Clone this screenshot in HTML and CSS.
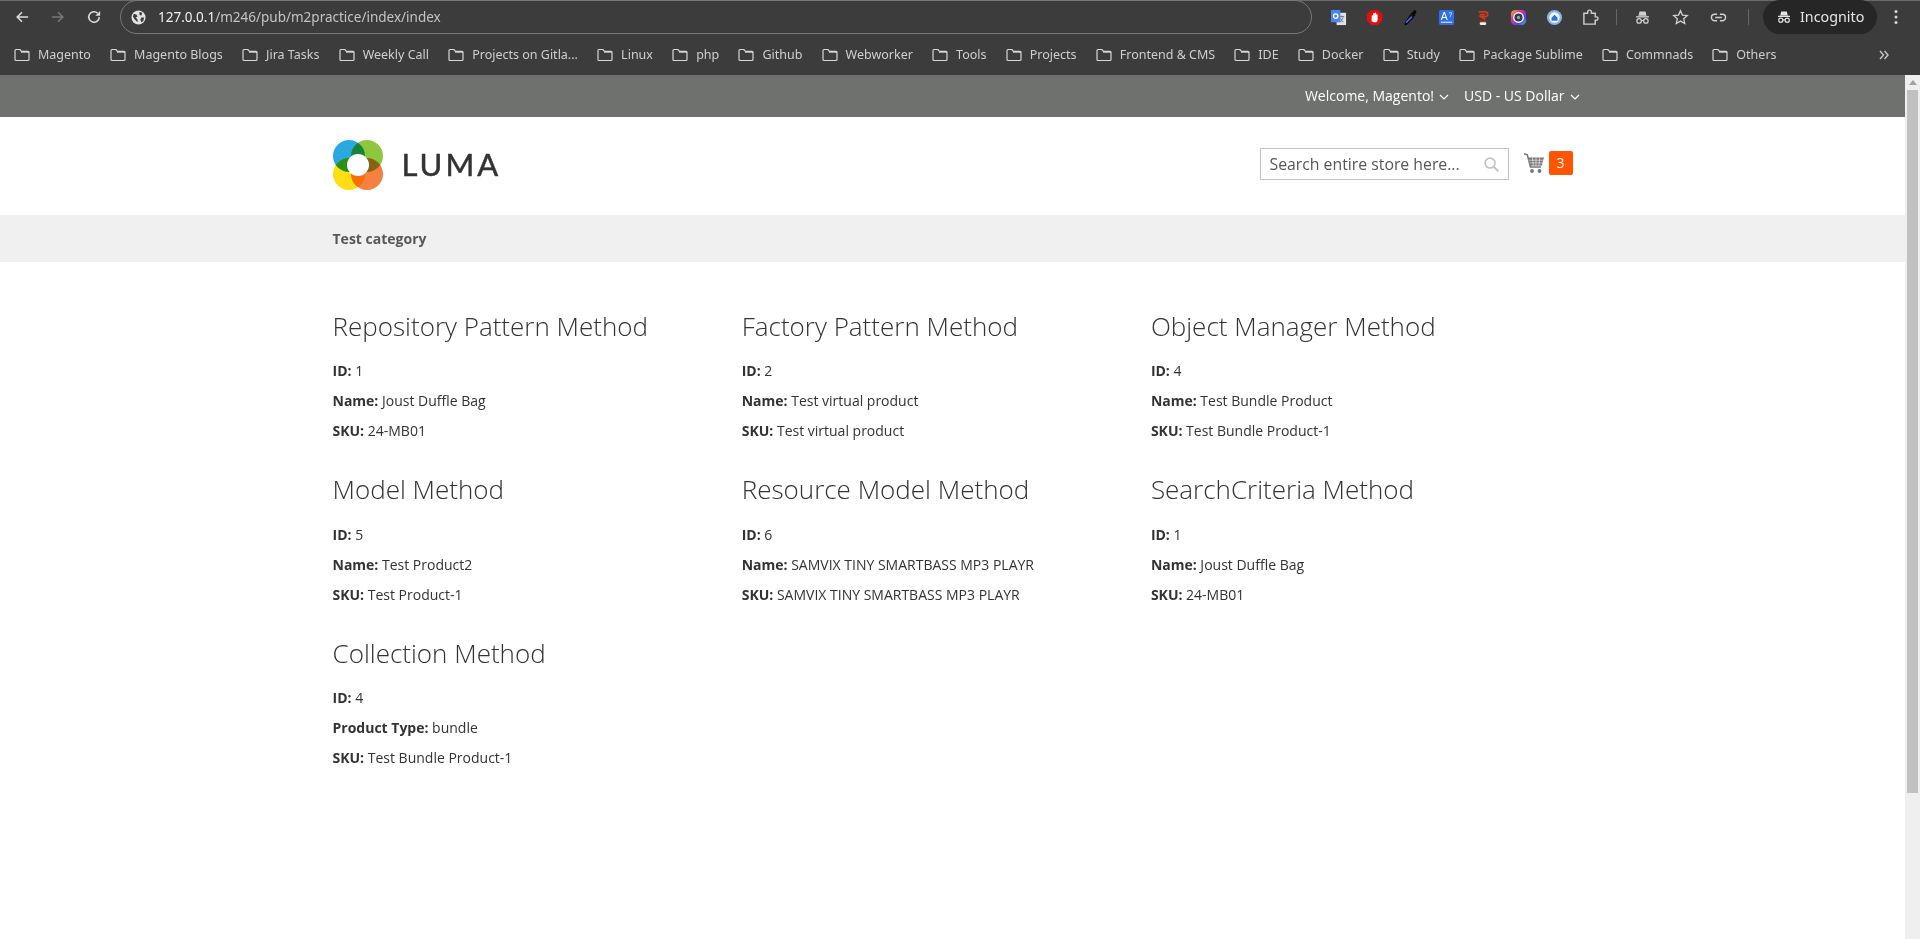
FILE: index.html
```html
<!DOCTYPE html>
<html lang="en">
<head>
    <meta charset="UTF-8">
    <meta name="viewport" content="width=device-width, initial-scale=1.0">
    <title>Test category</title>
    <link rel="stylesheet" href="styles.css">
</head>
<body>
    <svg class="sprites" width="0" height="0">
        <symbol id="folder" viewBox="0 0 16 14">
            <path d="M1 2.500c0-.6.4-1 1-1h3.900l1.600 1.800h6.500c.6 0 1 .4 1 1v7.200c0 .6-.4 1-1 1H2c-.6 0-1-.4-1-1z" fill="none" stroke="currentColor" stroke-width="1.200"/>
            <path d="M7 4.200h8" stroke="currentColor" stroke-width="1"/>
        </symbol>
        <symbol id="spy" viewBox="0 0 20 20">
            <path d="M6.500 3h7l1.300 5H5.200z" fill="currentColor"/>
            <path d="M2.500 9.200h15" stroke="currentColor" stroke-width="1.600"/>
            <circle cx="6" cy="14" r="2.600" fill="none" stroke="currentColor" stroke-width="1.500"/>
            <circle cx="14" cy="14" r="2.600" fill="none" stroke="currentColor" stroke-width="1.500"/>
            <path d="M8.600 13.600h2.800" stroke="currentColor" stroke-width="1.300"/>
        </symbol>
        <symbol id="chevron" viewBox="0 0 10 6">
            <path d="M1 1l4 4 4-4" fill="none" stroke="currentColor" stroke-width="1.200"/>
        </symbol>
    </svg>

    <header class="browser">
        <div class="toolbar">
            <div class="nav-buttons">
                <svg class="tool-icon" viewBox="0 0 16 16"><path d="M15 8H2.500M8 2.500L2.500 8 8 13.500" fill="none" stroke="currentColor" stroke-width="1.800"/></svg>
                <svg class="tool-icon disabled" viewBox="0 0 16 16"><path d="M1 8h12.500M8 2.500L13.500 8 8 13.500" fill="none" stroke="currentColor" stroke-width="1.800"/></svg>
                <svg class="tool-icon" viewBox="0 0 16 16"><path d="M14 8a6 6 0 1 1-1.800-4.300" fill="none" stroke="currentColor" stroke-width="1.800"/><path d="M15 1v5.500H9.500z" fill="currentColor"/></svg>
            </div>
            <div class="address-bar">
                <svg class="globe" viewBox="0 0 16 16"><circle cx="8" cy="8" r="7.500" fill="#e3e3e3"/><path d="M3 4l3 1 1 2-2 1 2 2v3L4 10 2 7zM9 2l3 1-1 3-2-1zM11 8h3l-1 4-2 1-1-3z" fill="#3c3c3c"/></svg>
                <span class="url"><b>127.0.0.1</b>/m246/pub/m2practice/index/index</span>
            </div>
            <div class="extensions">
                <svg class="ext" viewBox="0 0 18 18"><rect x="7" y="4" width="10" height="13" fill="#dfe3e6"/><path d="M10 8h5M12.500 7v2M11 14l3-5M11 10l3 4" stroke="#6d7780" fill="none"/><rect x="1" y="1" width="10" height="13" fill="#4a86e8"/><circle cx="6" cy="7.500" r="2.400" fill="none" stroke="#fff" stroke-width="1.300"/></svg>
                <svg class="ext" viewBox="0 0 18 18"><path d="M5.500 1h7L17 5.500v7L12.500 17h-7L1 12.500v-7z" fill="#e0100f"/><path d="M6 13V7.500a.8.8 0 0 1 1.600 0V5a.8.8 0 0 1 1.600 0v-.5a.8.8 0 0 1 1.600 0V6a.8.8 0 0 1 1.500 0v5c0 2-1 3-3 3H8z" fill="#fff"/></svg>
                <svg class="ext" viewBox="0 0 18 18"><path d="M12 1.500a2.200 2.200 0 0 1 3 3l-1.500 1.500.8.8-1.600 1.600-3.600-3.600 1.600-1.600.8.8zM9 5.400L12.600 9l-7 7.500c-.8.6-2 .8-2.800.6-.4-1 0-2.200.5-3z" fill="#0a0a0a"/><path d="M9.800 7.500L11 8.700l-5.500 5.800-1.500.3.300-1.500z" fill="#3f6fe0"/></svg>
                <svg class="ext" viewBox="0 0 18 18"><rect x="1" y="1" width="16" height="16" rx="2" fill="#2e6fe6"/><text class="ext-letter" x="3" y="12">A</text><text class="ext-sup" x="11" y="8">?</text><path d="M3 14h12" stroke="#fff"/></svg>
                <svg class="ext" viewBox="0 0 18 18"><path d="M5 3h7a2.500 2.500 0 0 1 0 5H7l5 3M6 6h6" fill="none" stroke="#d13a14" stroke-width="1.700"/><path d="M6 13h7" stroke="#a8321a" stroke-width="1.500"/><rect x="6" y="14" width="7" height="3" rx="1.500" fill="#eee"/></svg>
                <svg class="ext" viewBox="0 0 18 18"><defs><linearGradient id="ringfill" x1="0" y1="0" x2="1" y2="1"><stop offset="0" stop-color="#f0c020"/><stop offset=".35" stop-color="#e0309a"/><stop offset=".7" stop-color="#5a3ff0"/><stop offset="1" stop-color="#20d0c0"/></linearGradient></defs><rect x="1" y="1" width="16" height="16" rx="4.500" fill="url(#ringfill)"/><circle cx="9" cy="9" r="5.800" fill="#fff"/><circle cx="9" cy="9" r="4.300" fill="#2f3a44"/><circle cx="9" cy="9" r="1.800" fill="#8fa2ad"/></svg>
                <svg class="ext" viewBox="0 0 18 18"><circle cx="9" cy="9" r="8" fill="#8ab4f0"/><circle cx="9" cy="9" r="5.500" fill="#f2f6fd"/><path d="M5.800 9.200L9 6l3.200 3.200v3.300H5.800z" fill="#2f6fd8"/></svg>
                <svg class="ext" viewBox="0 0 18 18"><path d="M2 4.500h4V3.200a2 2 0 0 1 4 0v1.300h4v3.800h1.200a1.800 1.800 0 0 1 0 3.600H14V16H2z" fill="none" stroke="currentColor" stroke-width="1.500"/></svg>
                <span class="divider"></span>
                <div class="pinned">
                    <svg class="ext"><use href="#spy"/></svg>
                    <svg class="ext" viewBox="0 0 18 18"><path d="M9 1.800l2.100 4.700 5.100.5-3.800 3.400 1.100 5-4.500-2.600-4.500 2.600 1.100-5L1.800 7l5.100-.5z" fill="none" stroke="currentColor" stroke-width="1.400"/></svg>
                    <svg class="ext" viewBox="0 0 18 18"><path d="M7.500 5.500H5a3.500 3.500 0 0 0 0 7h2.500M10.500 5.500H13a3.500 3.500 0 0 1 0 7h-2.500M5.500 9h7" fill="none" stroke="currentColor" stroke-width="1.500"/></svg>
                </div>
                <span class="divider end"></span>
            </div>
            <div class="incognito">
                <svg class="spy-icon"><use href="#spy"/></svg>
                <span>Incognito</span>
            </div>
            <svg class="kebab" viewBox="0 0 4 16"><circle cx="2" cy="2.500" r="1.500"/><circle cx="2" cy="8" r="1.500"/><circle cx="2" cy="13.500" r="1.500"/></svg>
        </div>

        <nav class="bookmarks">
            <a class="bookmark"><svg><use href="#folder"/></svg>Magento</a>
            <a class="bookmark"><svg><use href="#folder"/></svg>Magento Blogs</a>
            <a class="bookmark"><svg><use href="#folder"/></svg>Jira Tasks</a>
            <a class="bookmark"><svg><use href="#folder"/></svg>Weekly Call</a>
            <a class="bookmark"><svg><use href="#folder"/></svg>Projects on Gitla...</a>
            <a class="bookmark"><svg><use href="#folder"/></svg>Linux</a>
            <a class="bookmark"><svg><use href="#folder"/></svg>php</a>
            <a class="bookmark"><svg><use href="#folder"/></svg>Github</a>
            <a class="bookmark"><svg><use href="#folder"/></svg>Webworker</a>
            <a class="bookmark"><svg><use href="#folder"/></svg>Tools</a>
            <a class="bookmark"><svg><use href="#folder"/></svg>Projects</a>
            <a class="bookmark"><svg><use href="#folder"/></svg>Frontend &amp; CMS</a>
            <a class="bookmark"><svg><use href="#folder"/></svg>IDE</a>
            <a class="bookmark"><svg><use href="#folder"/></svg>Docker</a>
            <a class="bookmark"><svg><use href="#folder"/></svg>Study</a>
            <a class="bookmark"><svg><use href="#folder"/></svg>Package Sublime</a>
            <a class="bookmark"><svg><use href="#folder"/></svg>Commnads</a>
            <a class="bookmark"><svg><use href="#folder"/></svg>Others</a>
            <svg class="more" viewBox="0 0 10 10"><path d="M1 1l3.500 4L1 9M5.500 1L9 5 5.500 9" fill="none" stroke="currentColor" stroke-width="1.400"/></svg>
        </nav>
    </header>

    <div class="viewport">
        <div class="page">
            <div class="panel">
                <div class="wrap panel-links">
                    <a class="panel-link">Welcome, Magento! <svg class="caret"><use href="#chevron"/></svg></a>
                    <a class="panel-link">USD - US Dollar <svg class="caret"><use href="#chevron"/></svg></a>
                </div>
            </div>

            <div class="wrap site-header">
                <a class="logo">
                    <svg class="logo-mark" viewBox="0 0 50 50">
                        <circle class="petal" cx="16" cy="16" r="16" fill="#29a9e0"/>
                        <circle class="petal" cx="34" cy="16" r="16" fill="#8dc63f"/>
                        <circle class="petal" cx="16" cy="34" r="16" fill="#ffdd15"/>
                        <circle class="petal" cx="34" cy="34" r="16" fill="#f58040"/>
                        <circle cx="25" cy="25" r="11" fill="#fff"/>
                    </svg>
                    <span class="logo-text">LUMA</span>
                </a>
                <div class="header-tools">
                    <div class="search-box">
                        <span class="search-placeholder">Search entire store here...</span>
                        <svg class="search-icon" viewBox="0 0 16 16"><circle cx="6.500" cy="6.500" r="5.300" fill="none" stroke="currentColor" stroke-width="1.700"/><path d="M10.200 10.200l5 5" stroke="currentColor" stroke-width="2"/></svg>
                    </div>
                    <a class="minicart">
                        <svg class="cart-icon" viewBox="0 0 20 20"><path d="M0 .8l3.300 1L6.500 14h10.500" fill="none" stroke="currentColor" stroke-width="1.500"/><path d="M4 4.500h16l-2.200 8H6.200z" fill="currentColor"/><path d="M4.500 7.200h15M5.500 9.900h13.500M8.500 4.500l.8 8M12 4.500v8M15.800 4.500l-.8 8" stroke="#fff" stroke-width=".6"/><circle cx="8" cy="18" r="1.900" fill="currentColor"/><circle cx="15.500" cy="18" r="1.900" fill="currentColor"/></svg>
                        <span class="cart-count">3</span>
                    </a>
                </div>
            </div>

            <nav class="category-nav">
                <div class="wrap"><a class="category-link">Test category</a></div>
            </nav>

            <main class="wrap methods">
                <section class="method">
                    <h2>Repository Pattern Method</h2>
                    <p><strong>ID:</strong> 1</p>
                    <p><strong>Name:</strong> Joust Duffle Bag</p>
                    <p><strong>SKU:</strong> 24-MB01</p>
                </section>
                <section class="method">
                    <h2>Factory Pattern Method</h2>
                    <p><strong>ID:</strong> 2</p>
                    <p><strong>Name:</strong> Test virtual product</p>
                    <p><strong>SKU:</strong> Test virtual product</p>
                </section>
                <section class="method">
                    <h2>Object Manager Method</h2>
                    <p><strong>ID:</strong> 4</p>
                    <p><strong>Name:</strong> Test Bundle Product</p>
                    <p><strong>SKU:</strong> Test Bundle Product-1</p>
                </section>
                <section class="method">
                    <h2>Model Method</h2>
                    <p><strong>ID:</strong> 5</p>
                    <p><strong>Name:</strong> Test Product2</p>
                    <p><strong>SKU:</strong> Test Product-1</p>
                </section>
                <section class="method">
                    <h2>Resource Model Method</h2>
                    <p><strong>ID:</strong> 6</p>
                    <p><strong>Name:</strong> SAMVIX TINY SMARTBASS MP3 PLAYR</p>
                    <p><strong>SKU:</strong> SAMVIX TINY SMARTBASS MP3 PLAYR</p>
                </section>
                <section class="method">
                    <h2>SearchCriteria Method</h2>
                    <p><strong>ID:</strong> 1</p>
                    <p><strong>Name:</strong> Joust Duffle Bag</p>
                    <p><strong>SKU:</strong> 24-MB01</p>
                </section>
                <section class="method">
                    <h2>Collection Method</h2>
                    <p><strong>ID:</strong> 4</p>
                    <p><strong>Product Type:</strong> bundle</p>
                    <p><strong>SKU:</strong> Test Bundle Product-1</p>
                </section>
            </main>
        </div>

        <div class="scrollbar">
            <span class="scroll-arrow"></span>
            <span class="scroll-thumb"></span>
        </div>
    </div>
</body>
</html>
```

FILE: styles.css
```css
* {
    margin: 0;
    padding: 0;
    box-sizing: border-box;
}

html, body {
    height: 939px;
    overflow: hidden;
}

body {
    display: flex;
    flex-direction: column;
    background-color: #fff;
    color: #333;
    font-family: "Open Sans", sans-serif;
    font-size: 14px;
    line-height: 20px;
}

.sprites {
    position: absolute;
}

/* browser chrome */
.browser {
    height: 75px;
    flex: none;
    background-color: #3c3c3c;
    box-shadow: inset 0 1px 0 #6a6a6a;
    font-family: "Noto Sans", sans-serif;
    color: #d4d4d4;
}

.toolbar {
    height: 34px;
    display: flex;
    align-items: center;
}

.nav-buttons {
    width: 120px;
    flex: none;
    display: flex;
    padding-left: 15px;
    gap: 22px;
}

.tool-icon {
    width: 14px;
    height: 14px;
    color: #dcdcdc;
}

.tool-icon.disabled {
    color: #777;
}

.address-bar {
    width: 1192px;
    height: 34px;
    flex: none;
    display: flex;
    align-items: center;
    gap: 12px;
    padding-left: 10px;
    border: 1px solid #787878;
    border-radius: 17px;
}

.globe {
    width: 15px;
    height: 15px;
    flex: none;
}

.url {
    font-size: 13.5px;
    color: #c4c4c4;
}

.url b {
    font-weight: 400;
    color: #f0f0f0;
}

.extensions {
    display: flex;
    align-items: center;
    gap: 19px;
    margin-left: 18px;
    color: #d0d0d0;
}

.pinned {
    display: flex;
    align-items: center;
    gap: 21px;
}

.ext {
    width: 17px;
    height: 17px;
    flex: none;
}

.ext-letter {
    font-family: "Liberation Sans", sans-serif;
    font-size: 11px;
    fill: #fff;
}

.ext-sup {
    font-family: "Liberation Sans", sans-serif;
    font-size: 7px;
    fill: #fff;
}

.divider {
    width: 1px;
    height: 16px;
    margin: 0 -2px;
    background-color: #666;
}

.divider.end {
    margin: 0 0 0 2px;
}

.incognito {
    width: 114px;
    height: 34px;
    flex: none;
    display: flex;
    align-items: center;
    gap: 8px;
    margin-left: 14px;
    padding-left: 13px;
    border-radius: 17px;
    background-color: #262626;
    color: #e4e4e4;
    font-size: 14.3px;
}

.spy-icon {
    width: 16px;
    height: 16px;
}

.kebab {
    width: 4px;
    height: 16px;
    margin-left: 17px;
    fill: #d8d8d8;
}

.bookmarks {
    height: 41px;
    display: flex;
    align-items: center;
    padding-left: 14px;
    font-size: 12.5px;
}

.bookmark {
    display: flex;
    align-items: center;
    gap: 8px;
    margin-right: 19.2px;
    white-space: nowrap;
    color: #cfcfcf;
}

.bookmark svg {
    width: 16px;
    height: 14px;
    color: #d8d8d8;
}

.more {
    width: 10px;
    height: 10px;
    margin-left: auto;
    margin-right: 31px;
    color: #c8c8c8;
}

/* page */
.viewport {
    flex: 1;
    display: flex;
    min-height: 0;
}

.page {
    flex: 1;
    min-width: 0;
}

.wrap {
    width: 1280px;
    margin: 0 auto;
    padding: 0 20px;
}

.panel {
    height: 42px;
    background-color: #6e716e;
}

.panel-links {
    height: 100%;
    display: flex;
    justify-content: flex-end;
    align-items: center;
    gap: 15px;
    padding-right: 13px;
    color: #fff;
}

.panel-link {
    display: flex;
    align-items: center;
    gap: 5px;
}

.caret {
    width: 10px;
    height: 6px;
    margin-top: 2px;
}

.site-header {
    height: 98px;
    display: flex;
    justify-content: space-between;
    align-items: flex-start;
}

.logo {
    display: flex;
    align-items: center;
    gap: 19px;
    margin-top: 23px;
}

.logo-mark {
    width: 50px;
    height: 50px;
}

.petal {
    mix-blend-mode: multiply;
}

.logo-text {
    margin-top: -2px;
    font-family: Lato, sans-serif;
    font-size: 31px;
    line-height: 36px;
    letter-spacing: 3px;
    color: #333;
    -webkit-text-stroke: 0.5px #333;
}

.header-tools {
    display: flex;
    align-items: center;
    gap: 15px;
    margin-top: 31px;
}

.search-box {
    width: 249px;
    height: 32px;
    display: flex;
    justify-content: space-between;
    align-items: center;
    padding: 0 9px;
    border: 1px solid #c2c2c2;
}

.search-placeholder {
    font-size: 15.8px;
    color: #575757;
}

.search-icon {
    width: 15px;
    height: 15px;
    color: #c2c2c2;
}

.minicart {
    display: flex;
    align-items: center;
    gap: 5px;
    margin-bottom: 2px;
}

.cart-icon {
    width: 20px;
    height: 20px;
    color: #757575;
}

.cart-count {
    width: 24px;
    height: 24px;
    border-radius: 2px;
    background-color: #ff5501;
    color: #fff;
    text-align: center;
    line-height: 24px;
}

.category-nav {
    height: 47px;
    display: flex;
    align-items: center;
    background-color: #f0f0f0;
}

.category-link {
    font-weight: 700;
    color: #575757;
}

.methods {
    display: grid;
    grid-template-columns: repeat(3, 33%);
    padding-top: 50.4px;
}

.method {
    height: 163.6px;
}

.method h2 {
    margin-top: -0.6px;
    margin-bottom: 20.6px;
    font-size: 26px;
    font-weight: 300;
    line-height: 28.6px;
}

.method p {
    margin-bottom: 10px;
}

/* fake scrollbar, the shot has one */
.scrollbar {
    width: 15px;
    flex: none;
    display: flex;
    flex-direction: column;
    align-items: center;
    background-color: #efefef;
}

.scroll-arrow {
    flex: none;
    margin: 5px 0;
    border-left: 4px solid transparent;
    border-right: 4px solid transparent;
    border-bottom: 5px solid #a3a3a3;
}

.scroll-thumb {
    width: 11px;
    height: 703px;
    flex: none;
    background-color: #c1c1c1;
}
```
